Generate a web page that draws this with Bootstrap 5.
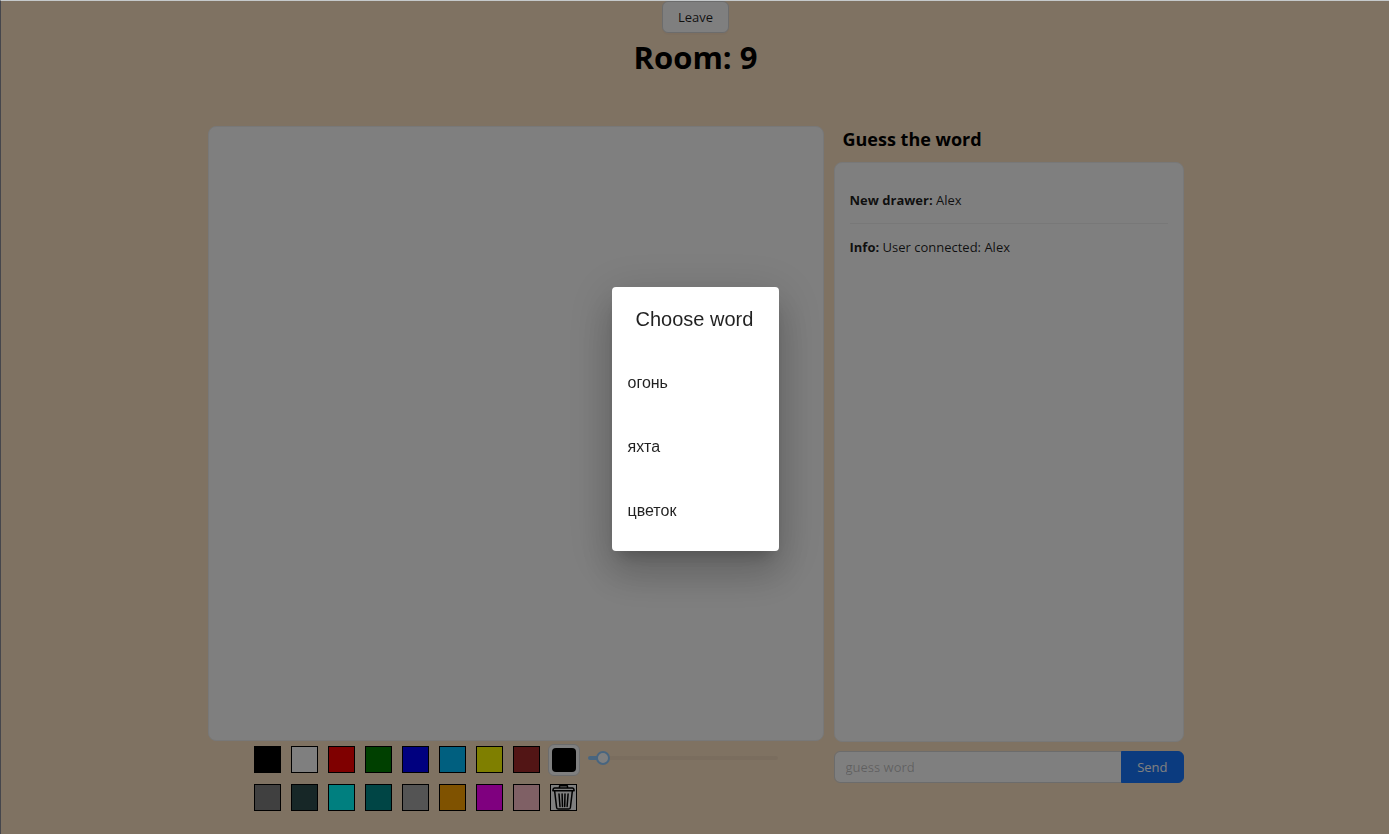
<!DOCTYPE html>
<html lang="en">
<head>
<meta charset="utf-8">
<meta name="viewport" content="width=device-width, initial-scale=1">
<title>Room 9</title>
<link href="https://cdn.jsdelivr.net/npm/bootstrap@5.3.0/dist/css/bootstrap.min.css" rel="stylesheet">
<style>
  body { background: #ffe4c4; color: rgba(0,0,0,.88); font: 13px/22px "Open Sans", "Noto Sans", sans-serif; padding-left: 2px; }
  .room { max-width: 976px; padding-top: 1px; }
  .room-btn { height: 32px; padding: 0 15px; font-size: 13px; line-height: 22px; border-radius: 6px; }
  .leave-btn { --bs-btn-bg: #fff; --bs-btn-border-color: #d9d9d9; --bs-btn-color: rgba(0,0,0,.88); box-shadow: 0 2px 0 rgba(0,0,0,.02); }
  .send-btn { --bs-btn-bg: #1677ff; --bs-btn-border-color: #1677ff; --bs-btn-color: #fff; }
  .room-title { font-size: 31px; line-height: 48px; font-weight: 700; color: #000; margin-bottom: 45px; }
  .play-area { gap: 10px; }
  .board { aspect-ratio: 616 / 615; background: #fff; border: 1px solid #f0f0f0; border-radius: 8px; width: 100%; display: block; }
  .tools { padding-left: 41px; }
  .palette { display: grid; grid-template-columns: repeat(8, 37px) 38px; grid-auto-rows: 37px; row-gap: 1px; place-items: center; }
  .swatch { width: 27px; height: 27px; border: 1px solid #000; padding: 0; display: block; }
  .picker { width: 32px; height: 32px; padding: 3px; background: #fff; border: 1px solid #d9d9d9; border-radius: 6px; appearance: none; }
  .picker::-webkit-color-swatch-wrapper { padding: 0; }
  .picker::-webkit-color-swatch { border: 0; border-radius: 4px; }
  .brush { appearance: none; width: 190px; height: 14px; margin: 10px 0 0 5px; padding: 0; background: none; }
  .brush::-webkit-slider-runnable-track { height: 4px; border-radius: 2px; background: linear-gradient(to right, #91caff 8%, rgba(0,0,0,.04) 8%); }
  .brush::-webkit-slider-thumb { appearance: none; width: 14px; height: 14px; margin-top: -5px; border: 2px solid #91caff; border-radius: 50%; background: #fff; }
  .chat-side { flex: 0 0 350px; }
  .chat-title { font-size: 18px; line-height: 27px; font-weight: 700; color: #000; margin: 0 0 9px 9px; }
  .chat-log { min-height: 580px; background: #fff; border: 1px solid #f0f0f0; border-radius: 8px; padding: 14px 15px; margin-bottom: 9px; }
  .chat-log li { padding: 12px 0; }
  .chat-log li + li { border-top: 1px solid #f0f0f0; }
  .guess { height: 32px; min-height: 32px; padding: 4px 11px; font-size: 13px; line-height: 22px; border-color: #d9d9d9; border-radius: 6px; }
  .guess::placeholder { color: rgba(0,0,0,.25); }
  .choose { display: flex; align-items: center; justify-content: center; padding-top: 3px; background: rgba(0,0,0,.5) padding-box; border: solid #45464c; border-width: 1px 0 0 1px; border-top-color: #c5c9cb; font-family: "Liberation Sans", Arial, sans-serif; color: rgba(0,0,0,.87); }
  .choose-box { min-width: 167px; background: #fff; border-radius: 4px; padding-bottom: 8px; box-shadow: 0 11px 15px -7px rgba(0,0,0,.2), 0 24px 38px 3px rgba(0,0,0,.14), 0 9px 46px 8px rgba(0,0,0,.12); }
  .choose-title { font-size: 20px; line-height: 32px; font-weight: 400; padding: 16px 24px; margin: 0; }
  .word { --bs-list-group-bg: #fff; font-size: 16px; line-height: 24px; padding: 20px 16px; border: 0; color: rgba(0,0,0,.87); }
</style>
</head>
<body>
<main class="room container-fluid px-0 mx-auto">
  <header class="text-center">
    <button type="button" class="btn room-btn leave-btn d-block mx-auto">Leave</button>
    <h1 class="room-title">Room: 9</h1>
  </header>
  <div class="play-area d-flex flex-column flex-lg-row">
    <section class="flex-grow-1">
      <canvas class="board" aria-label="Drawing board"></canvas>
      <div class="tools d-flex align-items-start">
        <div class="palette">
          <button type="button" class="swatch" aria-label="Black" style="background:#000"></button>
          <button type="button" class="swatch" aria-label="White" style="background:#fff"></button>
          <button type="button" class="swatch" aria-label="Red" style="background:red"></button>
          <button type="button" class="swatch" aria-label="Green" style="background:green"></button>
          <button type="button" class="swatch" aria-label="Blue" style="background:blue"></button>
          <button type="button" class="swatch" aria-label="Sky blue" style="background:deepskyblue"></button>
          <button type="button" class="swatch" aria-label="Yellow" style="background:yellow"></button>
          <button type="button" class="swatch" aria-label="Brown" style="background:brown"></button>
          <input type="color" class="picker" value="#000000" aria-label="Custom colour">
          <button type="button" class="swatch" aria-label="Gray" style="background:gray"></button>
          <button type="button" class="swatch" aria-label="Slate" style="background:darkslategray"></button>
          <button type="button" class="swatch" aria-label="Cyan" style="background:cyan"></button>
          <button type="button" class="swatch" aria-label="Dark cyan" style="background:darkcyan"></button>
          <button type="button" class="swatch" aria-label="Dark gray" style="background:darkgray"></button>
          <button type="button" class="swatch" aria-label="Orange" style="background:orange"></button>
          <button type="button" class="swatch" aria-label="Magenta" style="background:magenta"></button>
          <button type="button" class="swatch" aria-label="Pink" style="background:pink"></button>
          <button type="button" class="swatch bg-white" aria-label="Clear board">
            <svg class="d-block" width="25" height="25" viewBox="0 0 25 25" fill="none" stroke="#000" stroke-width="1.5" stroke-linejoin="round" stroke-linecap="round">
              <path d="M8.5 3V1.2Q8.5.7 9 .7h7q.5 0 .5.5V3M3.5 3h18q1 0 1.3 1l.3 1.7H1.9L2.2 4q.3-1 1.3-1zM3.6 5.7l2 16.8q.2 1.6 1.8 1.6h10.2q1.6 0 1.8-1.6l2-16.8M8 9l1 12.5M11.1 9l.4 12.5M14 9l-.3 12.5M17.1 9l-1 12.5"/>
            </svg>
          </button>
        </div>
        <input type="range" class="brush" min="0" max="176" value="8" aria-label="Brush size">
      </div>
    </section>
    <section class="chat-side">
      <h2 class="chat-title">Guess the word</h2>
      <ul class="chat-log list-unstyled">
        <li><b>New drawer:</b> Alex</li>
        <li><b>Info:</b> User connected: Alex</li>
      </ul>
      <form class="input-group">
        <input type="text" class="form-control guess" placeholder="guess word" aria-label="Guess word">
        <button type="button" class="btn room-btn send-btn">Send</button>
      </form>
    </section>
  </div>
</main>
<div class="choose modal" role="dialog" aria-modal="true" aria-labelledby="choose-title">
  <div class="choose-box">
    <h2 class="choose-title" id="choose-title">Choose word</h2>
    <div class="list-group list-group-flush">
      <button type="button" class="word list-group-item list-group-item-action">огонь</button>
      <button type="button" class="word list-group-item list-group-item-action">яхта</button>
      <button type="button" class="word list-group-item list-group-item-action">цветок</button>
    </div>
  </div>
</div>
<script src="https://cdn.jsdelivr.net/npm/bootstrap@5.3.0/dist/js/bootstrap.bundle.min.js"></script>
</body>
</html>
